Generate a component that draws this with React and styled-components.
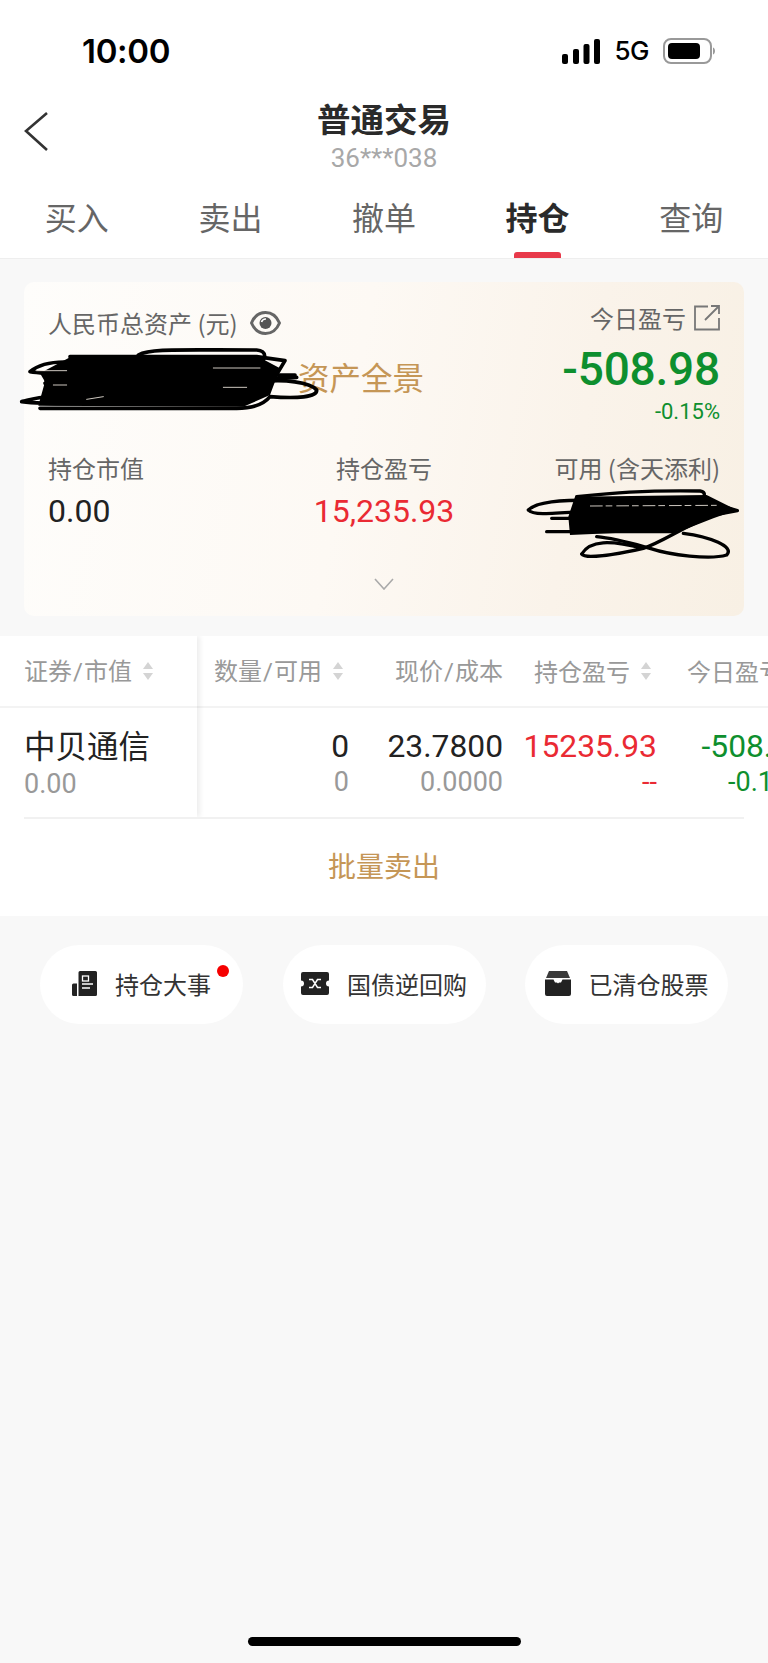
import React from "react";
import styled, { createGlobalStyle } from "styled-components";

const Global = createGlobalStyle`
  html, body { margin: 0; padding: 0; background: #f8f8f8; }
  * { box-sizing: border-box; }
  body { font-family: Roboto, "Noto Sans CJK SC", sans-serif; }
`;

const Page = styled.div`
  width: 768px;
  height: 1663px;
  position: relative;
  overflow: hidden;
  background: #f8f8f8;
  color: #222;
`;
const Top = styled.header`
  background: #fff;
  height: 258px;
`;
const StatusBar = styled.div`
  height: 100px;
  padding: 34px 53px 32px 82px;
  display: flex;
  justify-content: space-between;
  align-items: center;
`;
const Time = styled.span`
  font: 600 33px/34px Inter, sans-serif;
  letter-spacing: -0.3px;
  color: #000;
`;
const StatusRight = styled.div`
  display: flex;
  align-items: center;
  gap: 14px;
`;
const FiveG = styled.span`
  font: 500 26px/34px Inter, sans-serif;
  color: #000;
  letter-spacing: -0.5px;
`;
const NavBar = styled.div`
  height: 96px;
  display: grid;
  grid-template-columns: 1fr auto 1fr;
`;
const Back = styled.svg`
  width: 26px;
  height: 40px;
  margin: 11px 0 0 24px;
`;
const TitleBlock = styled.div`
  text-align: center;
`;
const Title = styled.div`
  font: 600 33.5px/36px "Noto Sans CJK SC", sans-serif;
  color: #2a2a2a;
`;
const Sub = styled.div`
  font: 400 26px/30px Roboto, sans-serif;
  color: #a8a8a8;
  margin-top: 7px;
`;
const Tabs = styled.nav`
  display: grid;
  grid-template-columns: repeat(5, 1fr);
  height: 62px;
`;
const Tab = styled.div`
  position: relative;
  text-align: center;
  font: ${p => (p.$active ? 600 : 400)} 32px/40px "Noto Sans CJK SC", sans-serif;
  color: ${p => (p.$active ? "#2a2a2a" : "#666")};
  ${p => p.$active && `
    &::after {
      content: "";
      position: absolute;
      left: 50%;
      bottom: 0;
      width: 47px;
      height: 6px;
      margin-left: -24px;
      border-radius: 3px 3px 0 0;
      background: #e8394a;
    }
  `}
`;
const Rule = styled.div`
  height: 1px;
  background: #eeeeee;
`;
const CardWrap = styled.section`
  padding: 23px 24px 20px;
`;
const Card = styled.div`
  position: relative;
  height: 334px;
  padding: 20px 24px 0;
  border-radius: 10px;
  background: linear-gradient(100deg, #fefdfb 0%, #fdf9f4 45%, #faf3ea 75%, #f8f0e4 100%);
`;
const CardTop = styled.div`
  display: flex;
  justify-content: space-between;
`;
const CardLeft = styled.div`
  padding-top: 4px;
`;
const LabelLine = styled.div`
  display: flex;
  align-items: center;
  gap: 12px;
  font: 400 24px/34px "Noto Sans CJK SC", sans-serif;
  color: #666;
`;
const Overview = styled.div`
  margin: 18px 0 0 250px;
  font: 400 31.5px/36px "Noto Sans CJK SC", sans-serif;
  color: #c59656;
  white-space: nowrap;
`;
const CardRight = styled.div`
  text-align: right;
`;
const TodayLine = styled.div`
  display: flex;
  justify-content: flex-end;
  align-items: center;
  gap: 8px;
  font: 400 24px/32px "Noto Sans CJK SC", sans-serif;
  color: #666;
`;
const BigNum = styled.div`
  margin-top: 7px;
  font: 500 46px/56px Roboto, sans-serif;
  letter-spacing: -0.2px;
  color: #0e8f2e;
`;
const Pct = styled.div`
  font: 400 22px/30px Roboto, sans-serif;
  color: #0e8f2e;
`;
const Metrics = styled.div`
  margin-top: 24px;
  display: grid;
  grid-template-columns: 1fr 1fr 1fr;
`;
const Metric = styled.div`
  text-align: ${p => p.$align};
`;
const MetricLabel = styled.div`
  font: 400 24px/34px "Noto Sans CJK SC", sans-serif;
  color: #666;
  white-space: nowrap;
`;
const MetricValue = styled.div`
  margin-top: 6px;
  font: 400 32px/40px Roboto, sans-serif;
  color: ${p => p.$color};
  min-height: 40px;
`;
const Chevron = styled.svg`
  display: block;
  width: 20px;
  height: 12px;
  margin: 47px auto 0;
`;
const Scribble = styled.svg`
  position: absolute;
  left: ${p => p.$x}px;
  top: ${p => p.$y}px;
  width: ${p => p.$w}px;
  height: ${p => p.$h}px;
  overflow: visible;
`;
const TableBox = styled.section`
  background: #fff;
  height: 280px;
`;
const Table = styled.div`
  display: flex;
  height: 181px;
  overflow: hidden;
`;
const Frozen = styled.div`
  flex: none;
  width: 197px;
  position: relative;
  z-index: 1;
  box-shadow: 3px 0 5px rgba(0, 0, 0, 0.07);
  background: #fff;
`;
const Scroll = styled.div`
  flex: 1;
  min-width: 0;
  overflow: hidden;
`;
const HeadRow = styled.div`
  height: 72px;
  border-bottom: 2px solid #f3f3f3;
  display: ${p => (p.$grid ? "grid" : "flex")};
  grid-template-columns: 152px 154px 154px 151px;
  width: ${p => (p.$grid ? "611px" : "auto")};
  align-items: center;
  padding-left: ${p => (p.$grid ? 0 : 24)}px;
`;
const HeadCell = styled.div`
  display: flex;
  justify-content: flex-end;
  align-items: center;
  gap: 10px;
  font: 400 24px/34px "Noto Sans CJK SC", sans-serif;
  color: #999;
  white-space: nowrap;
  padding-right: ${p => p.$pad || 0}px;
`;
const Slash = styled.span`
  font-family: Roboto, sans-serif;
  margin: 0 1px;
`;
const Sort = styled.svg`
  width: 12px;
  height: 20px;
  flex: none;
`;
const DataRow = styled.div`
  display: ${p => (p.$grid ? "grid" : "block")};
  grid-template-columns: 152px 154px 154px 151px;
  width: ${p => (p.$grid ? "611px" : "auto")};
  padding: 20px 0 0 ${p => (p.$grid ? 0 : 24)}px;
`;
const DataCell = styled.div`
  text-align: right;
`;
const Name = styled.div`
  font: 400 31.5px/32px "Noto Sans CJK SC", sans-serif;
  color: #222;
  margin-bottom: 7px;
`;
const Main = styled.div`
  font: 400 31.8px/36px Roboto, sans-serif;
  color: ${p => p.$color || "#222"};
  margin-bottom: 1px;
`;
const Minor = styled.div`
  font: 400 27px/34px Roboto, sans-serif;
  color: ${p => p.$color || "#999"};
`;
const Divider = styled.div`
  height: 2px;
  margin: 0 24px;
  background: #f1f1f1;
`;
const BatchSell = styled.div`
  height: 97px;
  padding-bottom: 6px;
  display: flex;
  align-items: center;
  justify-content: center;
  font: 400 28px/40px "Noto Sans CJK SC", sans-serif;
  color: #c59656;
`;
const Pills = styled.div`
  padding: 29px 40px 0;
  display: flex;
  justify-content: space-between;
`;
const Pill = styled.div`
  position: relative;
  width: 203px;
  height: 79px;
  padding-bottom: 2px;
  border-radius: 40px;
  background: #fff;
  display: flex;
  align-items: center;
  justify-content: center;
  gap: 18px;
  font: 400 24px/34px "Noto Sans CJK SC", sans-serif;
  color: #333;
`;
const Dot = styled.span`
  position: absolute;
  left: 177px;
  top: 20px;
  width: 12px;
  height: 12px;
  border-radius: 50%;
  background: #f50000;
`;
const Home = styled.div`
  position: absolute;
  left: 248px;
  bottom: 17px;
  width: 273px;
  height: 9px;
  border-radius: 5px;
  background: #000;
`;

const Signal = () => (
  <svg width="38" height="25" viewBox="0 0 38 25">
    <rect x="0" y="15" width="6" height="10" rx="2" fill="#000" />
    <rect x="11" y="10" width="6" height="15" rx="2" fill="#000" />
    <rect x="21.5" y="5" width="6" height="20" rx="2" fill="#000" />
    <rect x="32" y="0" width="6" height="25" rx="2" fill="#000" />
  </svg>
);
const Battery = () => (
  <svg width="52" height="26" viewBox="0 0 52 26">
    <rect x="1" y="1" width="47" height="24" rx="7" fill="none" stroke="#999" strokeWidth="2" />
    <rect x="5" y="5" width="32" height="16" rx="4" fill="#000" />
    <path d="M50 9.500c1.500.6 2 2 2 3.500s-.5 2.900-2 3.500z" fill="#999" />
  </svg>
);
const Eye = () => (
  <svg width="31" height="24" viewBox="0 0 31 24">
    <path d="M1.500 12C4 6 9 1.500 15.500 1.500S27 6 29.500 12C27 18 22 22.500 15.500 22.500S4 18 1.500 12Z" fill="none" stroke="#666" strokeWidth="3" strokeLinejoin="round" />
    <circle cx="15.500" cy="12" r="6" fill="#555" />
    <path d="M11.500 11a4.500 4.500 0 0 1 4.500-3" fill="none" stroke="#fff" strokeWidth="1.600" />
  </svg>
);
const Share = () => (
  <svg width="26" height="26" viewBox="0 0 26 26" fill="none" stroke="#777" strokeWidth="1.800">
    <path d="M14 1.500H1v23h24V13" />
    <path d="M11 15 24.500 1.500M17 1h8v8" />
  </svg>
);
const SortIcon = () => (
  <Sort viewBox="0 0 12 20">
    <path d="M6 1 11 8H1z" fill="#d4d4d4" />
    <path d="M6 19 1 12h10z" fill="#d4d4d4" />
  </Sort>
);
const NewsIcon = () => (
  <svg width="25" height="25" viewBox="0 0 25 25">
    <path d="M6.500 1.500a1.500 1.500 0 0 1 1.500-1.500h15.500a1.500 1.500 0 0 1 1.500 1.500v22a1.500 1.500 0 0 1-1.500 1.500H6.500z" fill="#222" />
    <path d="M0 14a1.500 1.500 0 0 1 1.500-1.500H5V25H1.500A1.500 1.500 0 0 1 0 23.500z" fill="#222" />
    <rect x="10.500" y="5" width="6" height="5" fill="none" stroke="#fff" strokeWidth="1.300" />
    <path d="M10 13h11M10 17h8" stroke="#fff" strokeWidth="1.500" />
  </svg>
);
const TicketIcon = () => (
  <svg width="28" height="23" viewBox="0 0 28 23">
    <path d="M2 0h24a2 2 0 0 1 2 2v6.500a3 3 0 0 0 0 6V21a2 2 0 0 1-2 2H2a2 2 0 0 1-2-2v-6.500a3 3 0 0 0 0-6V2a2 2 0 0 1 2-2Z" fill="#222" />
    <path d="M8 7.500h3.500l5 8H20M8 15.500h3.500l5-8H20" fill="none" stroke="#fff" strokeWidth="1.500" />
  </svg>
);
const TrayIcon = () => (
  <svg width="26" height="25" viewBox="0 0 26 25">
    <path d="M4 0h18l3 7H1z" fill="#3a3a3a" />
    <path d="M0 8.500h8.500l1.500 3h6l1.500-3H26V23a2 2 0 0 1-2 2H2a2 2 0 0 1-2-2z" fill="#222" />
    <path d="M10 9h6l-3 3.500z" fill="#fff" />
  </svg>
);

const ScribbleOne = () => (
  <Scribble $x={-14} $y={58} $w={320} $h={80} viewBox="0 0 960 240">
    <path d="M180 52 L745 50 L810 85 L780 165 L700 200 L85 197 L105 125 L90 100Z" fill="#000" />
    <g fill="none" stroke="#000" strokeWidth="11" strokeLinecap="round" strokeLinejoin="round">
      <path d="M60 95C90 70 140 62 200 68M60 95C120 105 220 100 320 98" />
      <path d="M110 118C100 142 130 150 210 145M105 130C150 118 220 120 300 125" />
      <path d="M35 185C100 165 200 162 310 170M35 185C120 195 220 190 300 190" />
      <path d="M385 45C420 25 500 30 740 30C772 32 772 62 740 72" />
      <path d="M180 50H740L825 62L795 112" />
      <path d="M690 105H855M680 125 860 112" />
      <path d="M755 125C820 118 900 125 920 150C922 172 860 176 780 170C760 195 720 205 680 205H90" />
      <path d="M640 70C720 80 780 90 760 130C740 160 700 165 640 160" />
    </g>
    <g fill="none" stroke="#f7efe6" strokeWidth="2.500" strokeLinecap="round">
      <path d="M80 92H170M610 84H750M130 135H170" />
      <path d="M230 178 280 170M640 142H710" />
    </g>
  </Scribble>
);
const ScribbleTwo = () => (
  <Scribble $x={486} $y={198} $w={240} $h={80} viewBox="0 0 720 240">
    <path d="M195 50 L590 45 L680 90 L610 115 L520 150 L180 165 L175 110Z" fill="#000" />
    <g fill="none" stroke="#000" strokeWidth="10" strokeLinecap="round" strokeLinejoin="round">
      <path d="M55 90C80 65 150 60 250 60M55 90C70 108 130 100 250 92" />
      <path d="M200 50C300 40 400 30 570 33C590 36 585 55 570 62" />
      <path d="M125 115H300M110 155H500" />
      <path d="M260 170C320 175 400 200 420 205C480 225 600 240 650 225C675 200 600 170 520 160" />
      <path d="M215 222C240 180 300 180 400 205M215 222C225 238 310 225 400 205C460 185 520 140 600 110" />
      <path d="M600 68L682 92L610 105" />
    </g>
    <path d="M240 78 620 76" stroke="#f7efe6" strokeWidth="2.500" strokeDasharray="38 9 20 12" fill="none" />
  </Scribble>
);

export default function App() {
  return (
    <Page>
      <Global />
      <Top>
        <StatusBar>
          <Time>10:00</Time>
          <StatusRight>
            <Signal />
            <FiveG>5G</FiveG>
            <Battery />
          </StatusRight>
        </StatusBar>
        <NavBar>
          <Back viewBox="0 0 26 40" fill="none" stroke="#333" strokeWidth="2.600">
            <path d="M23 2 2 20 23 39" />
          </Back>
          <TitleBlock>
            <Title>普通交易</Title>
            <Sub>36***038</Sub>
          </TitleBlock>
          <span />
        </NavBar>
        <Tabs>
          <Tab>买入</Tab>
          <Tab>卖出</Tab>
          <Tab>撤单</Tab>
          <Tab $active>持仓</Tab>
          <Tab>查询</Tab>
        </Tabs>
      </Top>
      <Rule />
      <CardWrap>
        <Card>
          <CardTop>
            <CardLeft>
              <LabelLine>
                人民币总资产 (元)
                <Eye />
              </LabelLine>
              <Overview>资产全景</Overview>
            </CardLeft>
            <CardRight>
              <TodayLine>
                今日盈亏
                <Share />
              </TodayLine>
              <BigNum>-508.98</BigNum>
              <Pct>-0.15%</Pct>
            </CardRight>
          </CardTop>
          <Metrics>
            <Metric $align="left">
              <MetricLabel>持仓市值</MetricLabel>
              <MetricValue $color="#222">0.00</MetricValue>
            </Metric>
            <Metric $align="center">
              <MetricLabel>持仓盈亏</MetricLabel>
              <MetricValue $color="#ea2a33">15,235.93</MetricValue>
            </Metric>
            <Metric $align="right">
              <MetricLabel>可用 (含天添利)</MetricLabel>
              <MetricValue />
            </Metric>
          </Metrics>
          <Chevron viewBox="0 0 20 12" fill="none" stroke="#aaa" strokeWidth="1.600">
            <path d="M1 1 10 11 19 1" />
          </Chevron>
          <ScribbleOne />
          <ScribbleTwo />
        </Card>
      </CardWrap>
      <TableBox>
        <Table>
          <Frozen>
            <HeadRow>
              <HeadCell>
                <span>证券<Slash>/</Slash>市值</span>
                <SortIcon />
              </HeadCell>
            </HeadRow>
            <DataRow>
              <Name>中贝通信</Name>
              <Minor>0.00</Minor>
            </DataRow>
          </Frozen>
          <Scroll>
            <HeadRow $grid>
              <HeadCell $pad={5}>
                <span>数量<Slash>/</Slash>可用</span>
                <SortIcon />
              </HeadCell>
              <HeadCell>
                <span>现价<Slash>/</Slash>成本</span>
              </HeadCell>
              <HeadCell $pad={5}>
                <span>持仓盈亏</span>
                <SortIcon />
              </HeadCell>
              <HeadCell $pad={3}>
                <span>今日盈亏</span>
                <SortIcon />
              </HeadCell>
            </HeadRow>
            <DataRow $grid>
              <DataCell>
                <Main>0</Main>
                <Minor>0</Minor>
              </DataCell>
              <DataCell>
                <Main>23.7800</Main>
                <Minor>0.0000</Minor>
              </DataCell>
              <DataCell>
                <Main $color="#ea2a33">15235.93</Main>
                <Minor $color="#ea2a33">--</Minor>
              </DataCell>
              <DataCell>
                <Main $color="#0e8f2e">-508.98</Main>
                <Minor $color="#0e8f2e">-0.15%</Minor>
              </DataCell>
            </DataRow>
          </Scroll>
        </Table>
        <Divider />
        <BatchSell>批量卖出</BatchSell>
      </TableBox>
      <Pills>
        <Pill>
          <NewsIcon />
          持仓大事
          <Dot />
        </Pill>
        <Pill>
          <TicketIcon />
          国债逆回购
        </Pill>
        <Pill>
          <TrayIcon />
          已清仓股票
        </Pill>
      </Pills>
      <Home />
    </Page>
  );
}
